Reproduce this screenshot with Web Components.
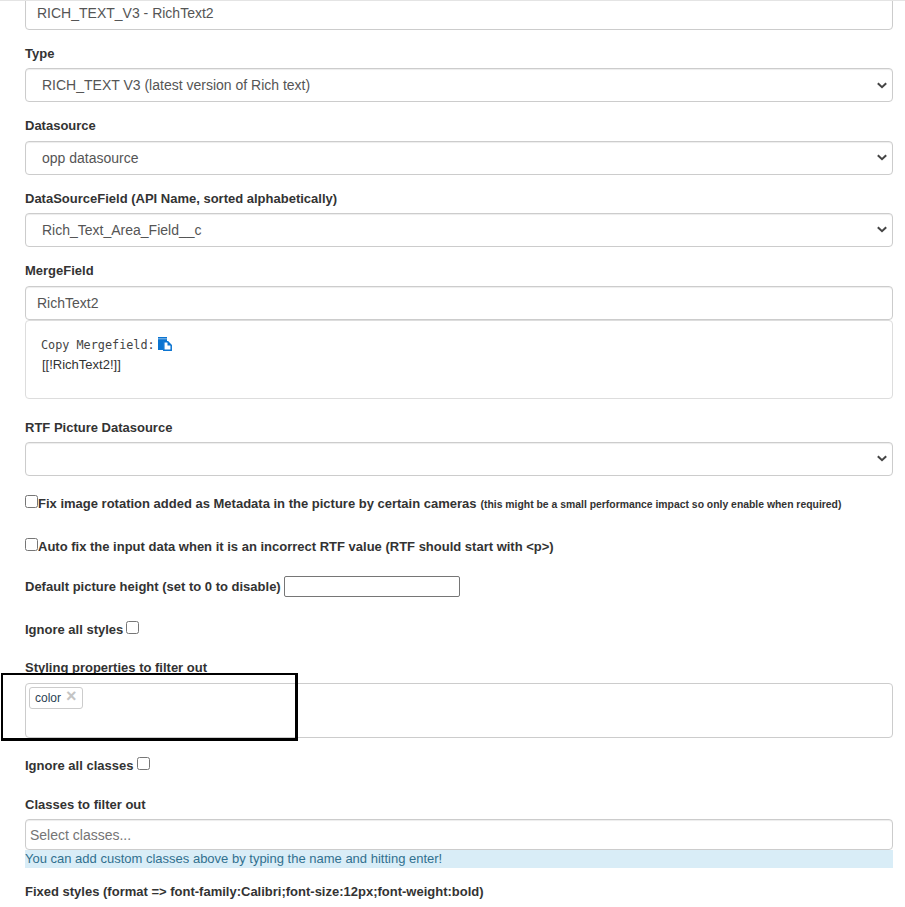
<!DOCTYPE html>
<html>
<head>
<meta charset="utf-8">
<style>
  html, body { margin: 0; padding: 0; background: #fff; }
  body {
    border-top: 1px solid #e4e4e4;
    height: 906px;
    overflow: hidden;
    font-family: "Liberation Sans", Arial, sans-serif;
    font-size: 14px;
    color: #333;
  }
  main { display: block; padding: 0 12px 0 25px; margin-top: -5px; }
</style>
</head>
<body>
<main>
  <form-field gap="13"><text-box value="RICH_TEXT_V3 - RichText2"></text-box></form-field>
  <form-field label="Type" gap="13.67"><select-box value="RICH_TEXT V3 (latest version of Rich text)"></select-box></form-field>
  <form-field label="Datasource" nudge="0" gap="13.33"><select-box value="opp datasource"></select-box></form-field>
  <form-field label="DataSourceField (API Name, sorted alphabetically)" gap="14"><select-box value="Rich_Text_Area_Field__c"></select-box></form-field>
  <form-field label="MergeField" nudge="0" gap="18"><text-box value="RichText2"></text-box><merge-help name="[[!RichText2!]]"></merge-help></form-field>
  <form-field label="RTF Picture Datasource" gap="17"><select-box value=""></select-box></form-field>
  <check-row top="0" text="Fix image rotation added as Metadata in the picture by certain cameras" note="(this might be a small performance impact so only enable when required)"></check-row>
  <check-row top="23" text="Auto fix the input data when it is an incorrect RTF value (RTF should start with &lt;p&gt;)"></check-row>
  <height-row></height-row>
  <ignore-row text="Ignore all styles" top="22" space="3"></ignore-row>
  <form-field label="Styling properties to filter out" gap="17" tag-gap="6"><tag-box tag="color" outlined></tag-box></form-field>
  <ignore-row text="Ignore all classes" top="0" space="4"></ignore-row>
  <form-field label="Classes to filter out" gap="13" style="margin-top:19px"><text-box value="Select classes..." tight></text-box><hint-bar>You can add custom classes above by typing the name and hitting enter!</hint-bar></form-field>
  <form-field label="Fixed styles (format =&gt; font-family:Calibri;font-size:12px;font-weight:bold)" gap="0"></form-field>
</main>
<script>
class FormField extends HTMLElement{
    constructor(){
        super()
        const label = this.getAttribute('label');
        const gap = this.getAttribute('gap') || 14;
        const labelGap = Number(this.getAttribute('tag-gap') || 5);
        // the reference sits on fractional rows, so most labels land a pixel lower
        const nudge = Number(this.getAttribute('nudge') || 1);
        this.attachShadow({mode: 'open'}).innerHTML = `
        <style>
            :host{ display: block; margin-bottom: ${gap}px; }
            .lbl{ display: block; font-size: 13px; font-weight: 700; line-height: 20px; padding-top: ${nudge}px; margin-bottom: ${labelGap - nudge}px; color: #333; }
        </style>
        ${label ? `<span class="lbl">${label.replace(/</g,'&lt;')}</span>` : ''}
        <slot></slot>`;
    }
}
class TextBox extends HTMLElement{
    constructor(){
        super()
        const tight = this.hasAttribute('tight');
        this.attachShadow({mode: 'open'}).innerHTML = `
        <style>
            :host{ display: flex; align-items: center; box-sizing: border-box; height: ${tight ? 31 : 34}px;
                padding: 0 11px; border: 1px solid #ccc; border-radius: 4px; background: #fff; color: #555;
                box-shadow: inset 0 1px 1px rgba(0,0,0,.075); }
            :host([tight]){ padding: 2px 4px 0; color: #757575; }
        </style>
        ${this.getAttribute('value')}`;
    }
}
class SelectBox extends HTMLElement{
    constructor(){
        super()
        this.attachShadow({mode: 'open'}).innerHTML = `
        <style>
            :host{ display: flex; align-items: center; justify-content: space-between; box-sizing: border-box; height: 34px;
                padding: 0 5px 0 16px; border: 1px solid #ccc; border-radius: 4px; background: #fff; color: #555;
                box-shadow: inset 0 1px 1px rgba(0,0,0,.075); }
            svg{ display: block; }
        </style>
        <span>${this.getAttribute('value')}</span>
        <svg width="10" height="7" viewBox="0 0 10 7"><path d="M.8 1.200 5 5.200 9.200 1.200" fill="none" stroke="#444" stroke-width="2"/></svg>`;
    }
}
class MergeHelp extends HTMLElement{
    constructor(){
        super()
        this.attachShadow({mode: 'open'}).innerHTML = `
        <style>
            :host{ display: block; box-sizing: border-box; height: 79px; padding: 16px 15px;
                border: 1px solid #ddd; border-radius: 4px; background: #fff; }
            .copy{ display: flex; align-items: center; gap: 3px; height: 16px; font: 11.8px "DejaVu Sans Mono", "Liberation Mono", monospace; color: #444; }
            .name{ margin: 2px 0 0 1px; font-size: 13px; line-height: 20px; }
            svg{ display: block; margin-top: -2px; }
        </style>
        <div class="copy">Copy Mergefield:
            <svg width="14" height="14" viewBox="0 0 14 14">
                <path fill="#0b74d1" d="M0 0h9v4H5v9H0z"/>
                <path stroke="#8fc0ea" d="M0 1.800h9"/>
                <path fill="#fff" stroke="#0b74d1" stroke-width="1.500" d="M5.800 4.800h4l3.400 3.400v5H5.800z"/>
                <path fill="#0b74d1" d="M9.500 4.500 13.500 8.500H9.500z"/>
            </svg>
        </div>
        <div class="name">${this.getAttribute('name')}</div>`;
    }
}
class CheckRow extends HTMLElement{
    constructor(){
        super()
        const note = this.getAttribute('note');
        this.attachShadow({mode: 'open'}).innerHTML = `
        <style>
            :host{ display: flex; align-items: center; height: 20px; margin-top: ${this.getAttribute('top')}px; font-size: 13px; font-weight: 700; white-space: nowrap; }
            input{ margin: -3px 0 0; width: 13px; height: 13px; flex: none; }
            span{ padding-top: 2px; }
            small{ font-size: 10.4px; margin-left: 4px; padding-top: 4px; }
        </style>
        <input type="checkbox"><span>${this.getAttribute('text').replace(/</g,'&lt;')}</span>${note ? `<small>${note}</small>` : ''}`;
    }
}
class HeightRow extends HTMLElement{
    constructor(){
        super()
        this.attachShadow({mode: 'open'}).innerHTML = `
        <style>
            :host{ display: flex; align-items: center; gap: 3px; height: 21px; margin-top: 20px; font-size: 13px; font-weight: 700; }
            .inp{ box-sizing: border-box; width: 176px; height: 21px; border: 1px solid #767676; border-radius: 2px; background: #fff; }
        </style>
        <span>Default picture height (set to 0 to disable)</span><div class="inp"></div>`;
    }
}
class IgnoreRow extends HTMLElement{
    constructor(){
        super()
        this.attachShadow({mode: 'open'}).innerHTML = `
        <style>
            :host{ display: flex; align-items: center; gap: ${this.getAttribute('space')}px; height: 20px; margin-top: ${this.getAttribute('top')}px; margin-bottom: 18px; font-size: 13px; font-weight: 700; }
            span{ padding-top: 2px; }
            input{ margin: -3px 0 0; width: 13px; height: 13px; }
        </style>
        <span>${this.getAttribute('text')}</span><input type="checkbox">`;
    }
}
class TagBox extends HTMLElement{
    constructor(){
        super()
        this.attachShadow({mode: 'open'}).innerHTML = `
        <style>
            :host{ display: block; position: relative; box-sizing: border-box; height: 55px; padding: 3px 3px;
                border: 1px solid #ccc; border-radius: 4px; background: #fff; }
            .tag{ display: inline-flex; align-items: center; box-sizing: border-box; height: 22px; width: 54px; padding: 0 5px;
                border: 1px solid #ccc; border-radius: 3px; font-size: 12px; color: #2b3f55; }
            .x{ margin-left: 5px; margin-top: -4px; color: #c4c4c4; font-size: 18px; font-weight: 700; line-height: 1; }
            .mark{ position: absolute; left: -25px; top: -11px; width: 297px; height: 68px; box-sizing: border-box;
                border: solid #000; border-width: 2px 3px 3px 2px; pointer-events: none; }
        </style>
        <span class="tag">${this.getAttribute('tag')}<span class="x">×</span></span>
        ${this.hasAttribute('outlined') ? '<div class="mark"></div>' : ''}`;
    }
}
class HintBar extends HTMLElement{
    constructor(){
        super()
        this.attachShadow({mode: 'open'}).innerHTML = `
        <style>
            :host{ display: block; height: 18px; font-size: 13px; line-height: 18px; background: #d9edf7; color: #31708f; }
        </style>
        <slot></slot>`;
    }
}
customElements.define('form-field', FormField);
customElements.define('text-box', TextBox);
customElements.define('select-box', SelectBox);
customElements.define('merge-help', MergeHelp);
customElements.define('check-row', CheckRow);
customElements.define('height-row', HeightRow);
customElements.define('ignore-row', IgnoreRow);
customElements.define('tag-box', TagBox);
customElements.define('hint-bar', HintBar);
</script>
</body>
</html>
